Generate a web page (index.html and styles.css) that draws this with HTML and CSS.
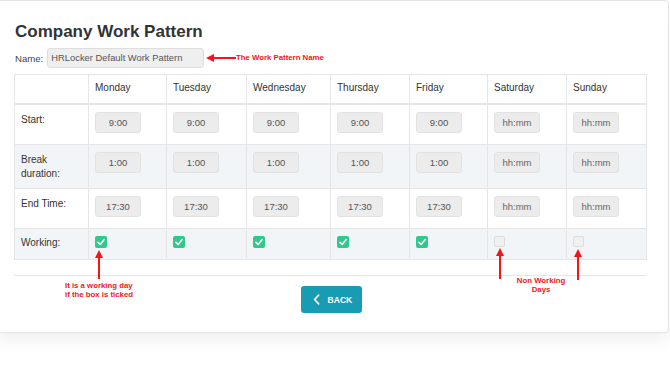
FILE: index.html
```html
<!DOCTYPE html>
<html>
<head>
<meta charset="utf-8">
<link rel="stylesheet" href="styles.css">
</head>
<body>
<div class="card">
  <h1 class="title">Company Work Pattern</h1>
  <div class="name-row">
    <span class="name-label">Name:</span>
    <span class="name-input">HRLocker Default Work Pattern</span>
  </div>
  <table class="pattern">
    <colgroup>
      <col style="width:74px"><col style="width:78px"><col style="width:80px"><col style="width:84px"><col style="width:79px"><col style="width:78px"><col style="width:79px"><col style="width:80px">
    </colgroup>
    <thead>
      <tr><th></th><th>Monday</th><th>Tuesday</th><th>Wednesday</th><th>Thursday</th><th>Friday</th><th>Saturday</th><th>Sunday</th></tr>
    </thead>
    <tbody>
      <tr class="r-start">
        <td class="lbl">Start:</td>
        <td><span class="tin">9:00</span></td><td><span class="tin">9:00</span></td><td><span class="tin">9:00</span></td><td><span class="tin">9:00</span></td><td><span class="tin">9:00</span></td><td><span class="tin ph">hh:mm</span></td><td><span class="tin ph">hh:mm</span></td>
      </tr>
      <tr class="r-break alt">
        <td class="lbl">Break<br>duration:</td>
        <td><span class="tin">1:00</span></td><td><span class="tin">1:00</span></td><td><span class="tin">1:00</span></td><td><span class="tin">1:00</span></td><td><span class="tin">1:00</span></td><td><span class="tin ph">hh:mm</span></td><td><span class="tin ph">hh:mm</span></td>
      </tr>
      <tr class="r-end">
        <td class="lbl">End Time:</td>
        <td><span class="tin">17:30</span></td><td><span class="tin">17:30</span></td><td><span class="tin">17:30</span></td><td><span class="tin">17:30</span></td><td><span class="tin">17:30</span></td><td><span class="tin ph">hh:mm</span></td><td><span class="tin ph">hh:mm</span></td>
      </tr>
      <tr class="r-work alt">
        <td class="lbl">Working:</td>
        <td><span class="cb on"><svg viewBox="0 0 12 12" width="12" height="12"><path d="M3 6.3 L5.2 8.4 L9.2 3.6" fill="none" stroke="#fff" stroke-width="1.6" stroke-linecap="round" stroke-linejoin="round"/></svg></span></td>
        <td><span class="cb on"><svg viewBox="0 0 12 12" width="12" height="12"><path d="M3 6.3 L5.2 8.4 L9.2 3.6" fill="none" stroke="#fff" stroke-width="1.6" stroke-linecap="round" stroke-linejoin="round"/></svg></span></td>
        <td><span class="cb on"><svg viewBox="0 0 12 12" width="12" height="12"><path d="M3 6.3 L5.2 8.4 L9.2 3.6" fill="none" stroke="#fff" stroke-width="1.6" stroke-linecap="round" stroke-linejoin="round"/></svg></span></td>
        <td><span class="cb on"><svg viewBox="0 0 12 12" width="12" height="12"><path d="M3 6.3 L5.2 8.4 L9.2 3.6" fill="none" stroke="#fff" stroke-width="1.6" stroke-linecap="round" stroke-linejoin="round"/></svg></span></td>
        <td><span class="cb on"><svg viewBox="0 0 12 12" width="12" height="12"><path d="M3 6.3 L5.2 8.4 L9.2 3.6" fill="none" stroke="#fff" stroke-width="1.6" stroke-linecap="round" stroke-linejoin="round"/></svg></span></td>
        <td><span class="cb off"></span></td>
        <td><span class="cb off"></span></td>
      </tr>
    </tbody>
  </table>
  <div class="sep"></div>
  <div class="actions">
    <button class="back"><svg viewBox="0 0 8 12" width="7" height="11"><path d="M6.5 1 L1.8 6 L6.5 11" fill="none" stroke="#fff" stroke-width="1.8" stroke-linecap="round" stroke-linejoin="round"/></svg><span>BACK</span></button>
  </div>
</div>

<div class="note note-name">
  <svg class="arrow-h" viewBox="0 0 30 8" width="30" height="8"><polygon points="0,4 8,0 8,8" fill="#f21616"/><rect x="7" y="3" width="23" height="2" fill="#f21616"/></svg>
  <span>The Work Pattern Name</span>
</div>
<svg class="arrow-v a-mon" viewBox="0 0 8 29" width="8" height="29"><polygon points="4,0 0,8 8,8" fill="#f21616"/><rect x="3" y="7" width="2" height="22" fill="#f21616"/></svg>
<svg class="arrow-v a-sat" viewBox="0 0 8 31" width="8" height="31"><polygon points="4,0 0,8 8,8" fill="#f21616"/><rect x="3" y="7" width="2" height="24" fill="#f21616"/></svg>
<svg class="arrow-v a-sun" viewBox="0 0 8 31" width="8" height="31"><polygon points="4,0 0,8 8,8" fill="#f21616"/><rect x="3" y="7" width="2" height="24" fill="#f21616"/></svg>
<div class="note note-work">It is a working day<br>if the box is ticked</div>
<div class="note note-non">Non Working<br>Days</div>
</body>
</html>
```
FILE: styles.css
```css
html, body {
  margin: 0;
  padding: 0;
  background: #ffffff;
}
body {
  position: relative;
  width: 670px;
  height: 377px;
  overflow: hidden;
  font-family: "Liberation Sans", Arial, sans-serif;
  color: #333;
}
.card {
  margin: 0 1px 0 -4px;
  border: 1px solid #e4e4e4;
  border-radius: 4px;
  padding: 21px 22px 19px 17px;
  background: #fff;
  box-shadow: 0 6px 18px rgba(0, 0, 0, 0.07);
}
.title {
  margin: 0;
  padding-left: 1px;
  font-size: 17px;
  line-height: 20px;
  font-weight: bold;
  color: #333;
}
.name-row {
  margin-top: 6px;
  display: flex;
  align-items: center;
  height: 20px;
  gap: 4px;
}
.name-label {
  font-size: 9.6px;
  color: #444;
  padding-left: 1px;
}
.name-input {
  box-sizing: border-box;
  width: 157px;
  height: 20px;
  line-height: 18px;
  background: #efefef;
  border: 1px solid #dedede;
  border-radius: 3px;
  padding-left: 3px;
  font-size: 9.4px;
  color: #555;
}
.pattern {
  margin-top: 6px;
  border-collapse: collapse;
  table-layout: fixed;
  width: 632px;
  font-size: 10px;
  color: #333;
}
.pattern th, .pattern td {
  border: 1px solid #e6e6e6;
  text-align: left;
  vertical-align: top;
  padding: 0 6px;
  line-height: 14px;
}
.pattern th {
  font-weight: normal;
  height: 29px;
  padding-top: 6px;
  box-sizing: border-box;
  border-bottom: 2px solid #e6e6e6;
}
.pattern td {
  padding-top: 7px;
  box-sizing: border-box;
}
.pattern td.lbl {
  padding-top: 8px;
}
.r-start td { height: 41px; }
.r-break td { height: 44px; }
.r-end td { height: 40px; }
.r-work td { height: 31px; }
.r-work td.lbl { padding-top: 7px; }
.alt td { background: #f2f5f8; }
.tin {
  display: block;
  box-sizing: border-box;
  width: 46px;
  height: 21px;
  line-height: 19px;
  text-align: center;
  background: #ececec;
  border: 1px solid #e2e2e2;
  border-radius: 3px;
  font-size: 9.5px;
  color: #555;
}
.tin.ph { color: #666; }
.cb {
  display: block;
  box-sizing: border-box;
  width: 12px;
  height: 12px;
  border-radius: 2px;
}
.cb svg { display: block; }
.cb.on { background: #30c98c; }
.cb.off {
  width: 11px;
  height: 11px;
  background: #f0f0f0;
  border: 1px solid #dcdcdc;
}
.sep {
  margin-top: 15px;
  height: 1px;
  background: #e6e6e6;
  width: 632px;
}
.actions {
  display: flex;
  justify-content: center;
  padding-top: 10px;
  width: 632px;
  padding-left: 1px;
}
.back {
  display: flex;
  align-items: center;
  gap: 8px;
  width: 61px;
  height: 27px;
  box-sizing: border-box;
  padding: 0 0 0 12px;
  border: 0;
  border-radius: 3px;
  background: #189cb3;
  color: #fff;
  font-family: "Liberation Sans", Arial, sans-serif;
  font-weight: bold;
  font-size: 8.6px;
}
.back svg { display: block; }
.note {
  position: absolute;
  color: #f21616;
  font-weight: bold;
  font-size: 7.8px;
  line-height: 9px;
}
.note-name {
  left: 206px;
  top: 53px;
  display: flex;
  align-items: center;
}
.arrow-h { display: block; }
.arrow-v { position: absolute; display: block; }
.a-mon { left: 95px; top: 250px; }
.a-sat { left: 496px; top: 248px; }
.a-sun { left: 574px; top: 249px; }
.note-work {
  left: 65px;
  top: 281px;
}
.note-non {
  left: 510px;
  top: 276px;
  width: 62px;
  text-align: center;
}
```
